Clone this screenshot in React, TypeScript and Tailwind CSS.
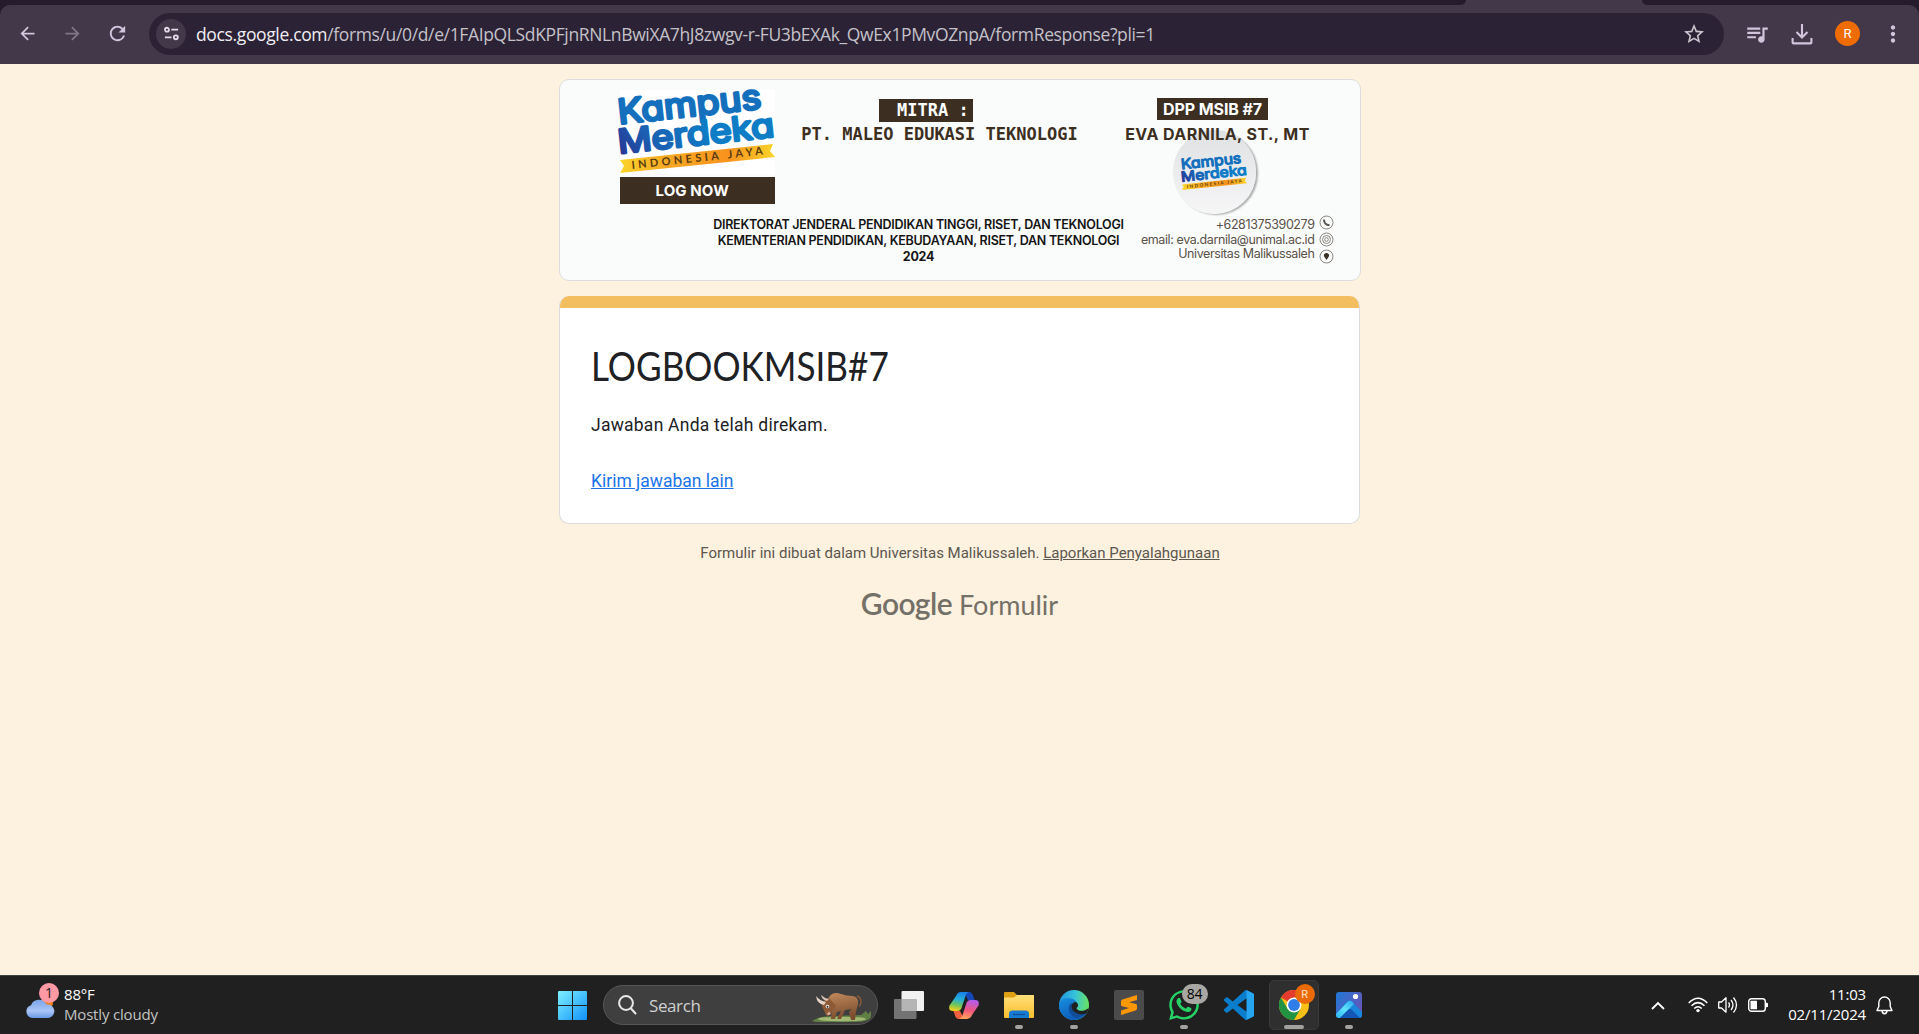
import React from "react";
import { MdQueueMusic, MdStarBorder, MdMoreVert, MdArrowBack, MdArrowForward, MdRefresh } from "react-icons/md";
import { FaWhatsapp } from "react-icons/fa";

function SiteControlsIcon() {
  return (
    <svg width="17" height="17" viewBox="0 0 18 18" fill="none" stroke="#e3dbe8" strokeWidth="1.9">
      <circle cx="4.2" cy="5" r="2.1" />
      <path d="M8.8 5H16M2 13H9" />
      <circle cx="13.6" cy="13" r="2.1" />
    </svg>
  );
}

function DownloadIcon() {
  return (
    <svg width="22" height="22" viewBox="0 0 22 22" fill="none" stroke="#d3c3dc" strokeWidth="2.1">
      <path d="M11 1V14M5.5 9L11 14.5L16.5 9M1.6 15V19.5Q1.6 20.4 2.5 20.4H19.5Q20.4 20.4 20.4 19.5V15" />
    </svg>
  );
}

function BrowserToolbar() {
  return (
    <header className="h-16 shrink-0 bg-[#241b2d]">
      <div className="flex h-[5px] bg-[#423849]">
        <div className="h-full flex-1 rounded-br-[14px] bg-[#241b2d]" />
        <div className="h-full w-[176px]" />
        <div className="h-full w-[277px] rounded-bl-[14px] bg-[#241b2d]" />
      </div>
      <div className="flex h-[59px] items-center rounded-t-[10px] bg-[#423849]">
        <MdArrowBack className="ml-[17px] size-[21px] -translate-y-px text-[#d3c3dc]" />
        <MdArrowForward className="ml-6 size-[21px] -translate-y-px text-[#81758a]" />
        <MdRefresh className="ml-[23px] size-[23px] -translate-y-px text-[#d3c3dc]" />
        <div className="ml-[20px] flex h-[42px] w-[1575px] -translate-y-px items-center rounded-full bg-[#2b2335] pl-[7px]">
          <div className="flex size-[30px] shrink-0 items-center justify-center rounded-full bg-[#423849]">
            <SiteControlsIcon />
          </div>
          <div className="ml-[10px] mt-[3px] whitespace-nowrap font-['Open_Sans','Noto_Sans',sans-serif] text-[17.5px] leading-none tracking-[-0.36px] text-[#c5c1c9]">
            <span className="text-[#f1edf4]">docs.google.com</span>
            <span>/forms/u/0/d/e/1FAIpQLSdKPFjnRNLnBwiXA7hJ8zwgv-r-FU3bEXAk_QwEx1PMvOZnpA/formResponse?pli=1</span>
          </div>
          <MdStarBorder className="ml-auto mr-[18px] size-[24px] text-[#cbc6ce]" />
        </div>
        <MdQueueMusic className="ml-5 size-[26px] -translate-y-px text-[#d3c3dc]" />
        <div className="ml-[21px] -translate-y-px"><DownloadIcon /></div>
        <div className="ml-[22px] flex size-[25px] -translate-y-px items-center justify-center rounded-full bg-[#ef6c00] font-['Roboto',sans-serif] text-[13px] text-white">R</div>
        <MdMoreVert className="ml-5 size-[26px] -translate-y-px text-[#d3c3dc]" />
      </div>
    </header>
  );
}

function KampusLogo({ id, className }: { id: string; className: string }) {
  const blue = "url(#" + id + "b)";
  return (
    <svg className={className} viewBox="0 0 155 83">
      <defs>
        <linearGradient id={id + "b"} gradientUnits="userSpaceOnUse" x1="0" y1="10" x2="70" y2="-40">
          <stop offset="0" stopColor="#2a2f8e" />
          <stop offset="0.45" stopColor="#1b5fb2" />
          <stop offset="1" stopColor="#0f7dc6" />
        </linearGradient>
        <linearGradient id={id + "y"}>
          <stop offset="0" stopColor="#fbd42a" />
          <stop offset="0.3" stopColor="#f7a823" />
          <stop offset="0.7" stopColor="#f7931e" />
          <stop offset="1" stopColor="#fbd42a" />
        </linearGradient>
      </defs>
      <g className="[font-feature-settings:'cv11']" fontFamily="Inter, sans-serif" fontWeight="400" stroke={blue} fill={blue} strokeWidth="2.8" strokeLinejoin="round">
        <text transform="translate(-1 34) rotate(-6.2)" fontSize="34" textLength="144" lengthAdjust="spacingAndGlyphs" fill="#1470bd" stroke="#1470bd">Kampus</text>
        <text transform="translate(-1 63.500) rotate(-6.2)" fontSize="33" textLength="157" lengthAdjust="spacingAndGlyphs">Merdeka</text>
      </g>
      <path d="M0 70L153 54L150 61L155 67L0 83L4 76Z" fill={"url(#" + id + "y)"} />
      <text transform="translate(12 79) rotate(-6.3)" fontFamily="Lato, sans-serif" fontWeight="700" fontSize="11" fill="#5a3b12" textLength="132">INDONESIA JAYA</text>
    </svg>
  );
}

function ContactIcon({ kind }: { kind: "phone" | "mail" | "pin" }) {
  return (
    <svg width="15" height="15" viewBox="0 0 15 15" fill="none" stroke="#8a8580" strokeWidth="1">
      <circle cx="7.5" cy="7.5" r="6.5" />
      {kind === "phone" && <path d="M5 4.5C5 8 7 10 10.5 10.2" stroke="#5d564f" strokeWidth="2" />}
      {kind === "mail" && (
        <g>
          <circle cx="7.5" cy="7.5" r="4" />
          <circle cx="7.5" cy="7.5" r="1.8" />
        </g>
      )}
      {kind === "pin" && <path d="M7.5 11L5 7.2A2.6 2.6 0 1 1 10 7.2Z" fill="#3c3024" stroke="none" />}
    </svg>
  );
}

function Banner() {
  return (
    <section className="flex h-[202px] w-[802px] shrink-0 flex-col overflow-hidden rounded-[10px] border border-[#dadce0] bg-[#fafcfb] font-['Inter',sans-serif]">
      <div className="flex h-[137px] shrink-0">
        <div className="ml-[60px] mt-[10px] w-[155px]">
          <div className="h-[84px] bg-white">
            <KampusLogo id="big" className="h-[83px] w-[155px] overflow-visible" />
          </div>
          <div className="mt-[3px] flex h-[27px] items-center bg-[#3c2f22] pl-[36px] text-[15px] font-bold leading-none tracking-[0.1px] text-white">
            LOG NOW
          </div>
        </div>
        <div className="ml-[26px] mt-[19px] flex w-[278px] flex-col items-center whitespace-nowrap font-['DejaVu_Sans_Mono',monospace] text-[17px] font-bold leading-none">
          <div className="ml-[-27px] flex h-[23px] w-[94px] items-center bg-[#3c2f22] pl-[18px] text-white">MITRA :</div>
          <div className="mt-1 text-[#3c2f22]">PT. MALEO EDUKASI TEKNOLOGI</div>
        </div>
        <div className="ml-[43px] mt-[18px] flex w-[192px] flex-col items-center whitespace-nowrap leading-none">
          <div className="ml-[-10px] flex h-[22px] w-[111px] items-center justify-center bg-[#3c2f22] text-[16px] font-bold tracking-[-0.1px] text-white">DPP MSIB #7</div>
          <div className="z-10 mt-[6px] text-[16px] font-bold tracking-[0.43px] text-[#3c2f22]">EVA DARNILA, ST., MT</div>
          <div className="ml-[-7px] mt-[-12px] flex h-[84px] w-[83px] shrink-0 justify-center rounded-full bg-gradient-to-b from-[#dfe1e3] to-[#f6f6f7] pt-[25px] shadow-[2px_1px_2px_#a9abad]">
            <KampusLogo id="mini" className="h-[35px] w-[65px] overflow-visible" />
          </div>
        </div>
      </div>
      <div className="flex whitespace-nowrap">
        <div className="ml-[149px] w-[420px] text-center text-[12.5px] font-semibold leading-4 tracking-[-0.27px] text-[#151515]">
          <div>DIREKTORAT JENDERAL PENDIDIKAN TINGGI, RISET, DAN TEKNOLOGI</div>
          <div>KEMENTERIAN PENDIDIKAN, KEBUDAYAAN, RISET, DAN TEKNOLOGI</div>
          <div className="font-bold">2024</div>
        </div>
        <div className="ml-auto text-right text-[12.5px] leading-[15px] tracking-[-0.4px] text-[#5b5249]">
          <div>+6281375390279</div>
          <div>email: eva.darnila@unimal.ac.id</div>
          <div className="-mt-px">Universitas Malikussaleh</div>
        </div>
        <div className="ml-[4px] mr-[26px] mt-[-2px] flex flex-col gap-[2px]">
          <ContactIcon kind="phone" />
          <ContactIcon kind="mail" />
          <ContactIcon kind="pin" />
        </div>
      </div>
    </section>
  );
}

function ResponseCard() {
  return (
    <section className="mt-[15px] h-[228px] w-[801px] shrink-0 overflow-hidden rounded-[10px] border border-t-0 border-[#dadce0] bg-white">
      <div className="h-3 bg-[#f2be5f]" />
      <div className="pl-[31px] font-['Roboto',sans-serif] text-[17.5px] text-[#202124]">
        <h1 className="mt-[33px] origin-left scale-x-[0.878] whitespace-nowrap font-['Lato',sans-serif] text-[40px] leading-[50px]">LOGBOOKMSIB#7</h1>
        <p className="mt-[22px] leading-[25px] tracking-[0.24px]">Jawaban Anda telah direkam.</p>
        <p className="mt-[31px] leading-[25px]"><a href="#" className="text-[#1a73e8] underline">Kirim jawaban lain</a></p>
      </div>
    </section>
  );
}

function WeatherIcon() {
  return (
    <svg width="30" height="22" viewBox="0 0 30 22">
      <defs>
        <linearGradient id="cloud" x1="0" y1="0" x2="0" y2="1">
          <stop offset="0" stopColor="#7ba4ea" />
          <stop offset="0.6" stopColor="#a9c6f7" />
          <stop offset="1" stopColor="#6c98e8" />
        </linearGradient>
      </defs>
      <circle cx="22" cy="6" r="6" fill="#f0801c" />
      <path d="M7 21A6.6 6.6 0 0 1 6 8.2A8.5 8.5 0 0 1 21.500 7.500A6.800 6.800 0 0 1 23.500 21Z" fill="url(#cloud)" />
    </svg>
  );
}

function StartIcon() {
  return (
    <svg width="29" height="29" viewBox="0 0 29 29">
      <defs>
        <linearGradient id="win" x1="0" y1="0" x2="29" y2="29" gradientUnits="userSpaceOnUse">
          <stop offset="0" stopColor="#7df0ff" />
          <stop offset="1" stopColor="#1192fc" />
        </linearGradient>
      </defs>
      <path d="M1 0H14V14H0V1Q0 0 1 0ZM15 0H28Q29 0 29 1V14H15ZM0 15H14V29H1Q0 29 0 28ZM15 15H29V28Q29 29 28 29H15Z" fill="url(#win)" />
    </svg>
  );
}

function BisonArt() {
  return (
    <svg width="62" height="31" viewBox="0 0 62 31">
      <defs>
        <linearGradient id="fur" x1="0" y1="0" x2="0.2" y2="1">
          <stop offset="0" stopColor="#c18a5c" />
          <stop offset="1" stopColor="#7a4c2e" />
        </linearGradient>
      </defs>
      <path d="M1 29Q8 24 22 24L50 23L55 19L57 22L60 19V25Q58 30 44 30H8Q3 30 1 29Z" fill="#5f7f45" />
      <ellipse cx="31" cy="27" rx="24" ry="2.300" fill="#a3b873" />
      <path d="M46 4Q50 5 50 10Q50 13 48 14" stroke="#8a5a38" strokeWidth="1.500" fill="none" />
      <path d="M21 16L20 27H24L26 20L30 19L26 27H30L34 18L41 17L38 20L40 28H44L45 20L47 12Q48 5 42 4Q35 4 30 2Q22 -1 18 5Q15 9 18 15Z" fill="url(#fur)" />
      <path d="M18 6Q10 9 11 14L15 23Q18 25 20 21L25 14Z" fill="#8d5a37" />
      <path d="M13 13Q6 12 5 4Q9 9 15 10Z" fill="#e5d3c8" />
      <path d="M16 9Q11 8 10 3Q13 6 18 7Z" fill="#d8c2b6" />
      <circle cx="16.500" cy="14.500" r="1.800" fill="#fff" />
      <circle cx="16.500" cy="14.800" r="1" fill="#222" />
      <path d="M15.500 22Q18 24.500 20 21.500L18 19.500Z" fill="#d9a58c" />
    </svg>
  );
}

function SearchIcon() {
  return (
    <svg width="19" height="20" viewBox="0 0 19 20" fill="none" stroke="#e8e8e8" strokeWidth="2" strokeLinecap="round">
      <circle cx="8" cy="8" r="6.900" />
      <path d="M13 13.500L17.500 18.500" />
    </svg>
  );
}

function TaskViewIcon() {
  return (
    <svg width="30" height="28" viewBox="0 0 30 28">
      <rect x="7.500" y="0" width="22.500" height="20" rx="1" fill="#f1f1f1" />
      <rect x="0" y="8" width="22.500" height="20" rx="1" fill="#737373" />
      <path d="M7.500 8H22.500V20H7.500Z" fill="#b5b5b5" />
    </svg>
  );
}

function CopilotIcon() {
  return (
    <svg width="30" height="27" viewBox="0 0 30 27">
      <defs>
        <linearGradient id="copA" x1="0.600" y1="0" x2="0.400" y2="1">
          <stop offset="0" stopColor="#1a7fe8" />
          <stop offset="0.400" stopColor="#23b0d8" />
          <stop offset="0.700" stopColor="#6fc55a" />
          <stop offset="1" stopColor="#f3d21c" />
        </linearGradient>
        <linearGradient id="copB" x1="0.600" y1="0" x2="0.400" y2="1">
          <stop offset="0" stopColor="#b35cf0" />
          <stop offset="0.550" stopColor="#f0577c" />
          <stop offset="1" stopColor="#ffa45c" />
        </linearGradient>
      </defs>
      <path d="M15 0H20Q23 0 24 3.500L25.500 8H19Z" fill="#1547b8" />
      <path d="M15 27H10Q7 27 6 23.500L4.500 19H11Z" fill="#f0603e" />
      <path d="M7 4Q8.500 0 12 0H20Q17.500 .5 16.500 4L12.500 16Q11.500 19 8.500 19H4Q-1 19 .5 13.500Z" fill="url(#copA)" />
      <path d="M23 23Q21.500 27 18 27H10Q12.500 26.500 13.500 23L17.500 11Q18.500 8 21.500 8H26Q31 8 29.500 13.500Z" fill="url(#copB)" />
    </svg>
  );
}

function FolderIcon() {
  return (
    <svg width="30" height="28" viewBox="0 0 30 28">
      <defs>
        <linearGradient id="fold" x1="0" y1="0" x2="0" y2="1">
          <stop offset="0" stopColor="#ffe07a" />
          <stop offset="1" stopColor="#fbbd2c" />
        </linearGradient>
      </defs>
      <path d="M0 2Q0 1 1 1H10L13 4H29Q30 4 30 5V12H0Z" fill="#dd9f13" />
      <path d="M0 6.500H10L13 4H29Q30 4 30 5V26Q30 27 29 27H1Q0 27 0 26Z" fill="url(#fold)" />
      <path d="M5 27V23Q5 19.500 8.500 19.500H21.500Q25 19.500 25 23V27Z" fill="#1779cf" />
      <path d="M9 23.500H21" stroke="#0d4f96" strokeWidth="1.200" />
    </svg>
  );
}

function EdgeIcon() {
  return (
    <svg width="30" height="30" viewBox="0 0 30 30">
      <defs>
        <linearGradient id="edT" x1="0" y1="0.300" x2="1" y2="0.400">
          <stop offset="0" stopColor="#2391dd" />
          <stop offset="0.500" stopColor="#34c2dc" />
          <stop offset="1" stopColor="#6be35f" />
        </linearGradient>
        <linearGradient id="edB" x1="0" y1="0" x2="0.500" y2="1">
          <stop offset="0" stopColor="#1790e0" />
          <stop offset="1" stopColor="#0c59b8" />
        </linearGradient>
        <clipPath id="edC"><circle cx="15" cy="15" r="15" /></clipPath>
      </defs>
      <g clipPath="url(#edC)">
        <rect width="30" height="30" fill="url(#edT)" />
        <path d="M0 14Q2 8 9 8Q16.500 8 18.500 14L16 19L30 22V30H0Z" fill="url(#edB)" />
        <path d="M12 13Q9 16 10 21Q12.500 28 19 28L30 22L20 22Z" fill="#114d96" />
        <path d="M18.500 13.500Q20 16 17.500 18Q18 21 23 20.800Q27 20.500 30 17V24L28 23Q24 25 20 24Q13 22 12.500 17Q12.500 13 16 12Q18 12 18.500 13.500Z" fill="#202020" />
        <path d="M18.500 18Q22 21 26 18.500Q30 15.500 30 12V18Q25 21.500 21 20.500Q18 20 18.500 18Z" fill="#5bd86c" />
      </g>
    </svg>
  );
}

function SublimeIcon() {
  return (
    <svg width="30" height="30" viewBox="0 0 30 30">
      <rect width="30" height="30" rx="2" fill="#4b4b4b" />
      <path d="M23 5L8.500 9.500Q7 10 7 11.500V15Q7 16 8 16.300L15 18L7 20.500V25L21.500 20.500Q23 20 23 18.500V15.500Q23 14.300 22 14L15 12.300L23 10Z" fill="#ff9800" />
    </svg>
  );
}

function CodeIcon() {
  const d = "M23.15 2.587L18.21.21a1.494 1.494 0 0 0-1.705.29l-9.46 8.63-4.12-3.128a.999.999 0 0 0-1.276.057L.327 7.261A1 1 0 0 0 .326 8.74L3.899 12 .326 15.26a1 1 0 0 0 .001 1.479L1.65 17.94a.999.999 0 0 0 1.276.057l4.12-3.128 9.46 8.63a1.492 1.492 0 0 0 1.704.29l4.942-2.377A1.5 1.5 0 0 0 24 20.06V3.939a1.5 1.5 0 0 0-.85-1.352zm-5.146 14.861L10.826 12l7.178-5.448v10.896z";
  return (
    <svg width="30" height="30" viewBox="0 0 24 24">
      <clipPath id="codeR"><rect x="18" width="6" height="24" /></clipPath>
      <path d={d} fill="#0a7dcc" />
      <path d={d} fill="#27a6f0" clipPath="url(#codeR)" />
    </svg>
  );
}

function ChromeIcon() {
  return (
    <svg width="30" height="30" viewBox="0 0 30 30">
      <circle cx="15" cy="15" r="15" fill="#fbc116" />
      <path d="M15 15L2 7.500A15 15 0 0 1 28 7.500H15Z" fill="#e33b2e" />
      <path d="M2 7.500A15 15 0 0 0 15 30L21.500 18.700L8.500 18.700Z" fill="#229342" />
      <circle cx="15" cy="15" r="7.500" fill="#fff" />
      <circle cx="15" cy="15" r="5.900" fill="#2f7de9" />
    </svg>
  );
}

function PhotosIcon() {
  return (
    <svg width="26" height="26" viewBox="0 0 26 26">
      <defs>
        <linearGradient id="phB" x1="0" y1="0" x2="1" y2="0.600">
          <stop offset="0" stopColor="#1f78d6" />
          <stop offset="1" stopColor="#6457b8" />
        </linearGradient>
        <linearGradient id="phM" x1="1" y1="0" x2="0" y2="1">
          <stop offset="0" stopColor="#2aa5ee" />
          <stop offset="0.500" stopColor="#5fe3fb" />
          <stop offset="1" stopColor="#26b3f2" />
        </linearGradient>
        <clipPath id="phC"><rect width="26" height="26" rx="3" /></clipPath>
      </defs>
      <g clipPath="url(#phC)">
        <rect width="26" height="26" fill="url(#phB)" />
        <path d="M8 12L12 9Q14 8 16 9.500L26 20V26H6Z" fill="#1a86dd" />
        <path d="M0 22L12 9.500Q14 8 16 9.500L18 12L4 26H0Z" fill="url(#phM)" />
        <path d="M4 26L12.500 17.500Q14 16.300 15.500 17.500L24 26Z" fill="#1257b4" />
        <circle cx="19.500" cy="4.500" r="2.600" fill="#fff" />
      </g>
    </svg>
  );
}

function TaskCell({ children, dot, active, badge }: { children: React.ReactNode; dot?: boolean; active?: boolean; badge?: React.ReactNode }) {
  return (
    <div className="flex w-[55px] justify-center">
      <div className={"relative mt-1 flex h-[50px] w-[50px] flex-col items-center rounded-[5px] border " + (active ? "border-[#3a3a3a] bg-[#2f2f2f]" : "border-transparent")}>
        <div className="mt-[9px] flex h-[30px] items-center">{children}</div>
        {(dot || active) && <div className={"mt-[5px] h-1 rounded-full bg-[#a3a19d] " + (active ? "w-5" : "w-2")} />}
        {badge}
      </div>
    </div>
  );
}

function TrayIcons() {
  return (
    <div className="flex items-center">
      <svg width="14" height="9" viewBox="0 0 14 9" fill="none" stroke="#fff" strokeWidth="1.800"><path d="M1 8L7 2L13 8" /></svg>
      <svg className="ml-[23px]" width="20" height="16" viewBox="0 0 20 16" fill="none" stroke="#fff" strokeWidth="1.500">
        <path d="M0.700 6Q10 -3.500 19.300 6M3.500 8.800Q10 2.500 16.500 8.800M6.200 11.500Q10 8 13.800 11.500" />
        <circle cx="10" cy="13.600" r="1.700" fill="#fff" stroke="none" />
      </svg>
      <svg className="ml-[10px]" width="21" height="18" viewBox="0 0 21 18" fill="none" stroke="#fff" strokeWidth="1.300" strokeLinejoin="round">
        <path d="M0.700 6H3.500L8 1.800V16.200L3.500 12H0.700Z" />
        <path d="M10.500 6.500Q12.500 9 10.500 11.500M13 4Q17 9 13 14M15.500 1.500Q21.500 9 15.500 16.500" />
      </svg>
      <svg className="ml-[9px]" width="21" height="14" viewBox="0 0 21 14">
        <rect x="0.700" y="0.700" width="16.600" height="12.600" rx="2.800" fill="none" stroke="#fff" strokeWidth="1.400" />
        <rect x="2.500" y="2.800" width="6.500" height="8.400" rx="0.500" fill="#fff" />
        <path d="M18 4.500L20 5.300V8.700L18 9.500Z" fill="#fff" />
      </svg>
    </div>
  );
}

function Taskbar() {
  return (
    <footer className="flex h-[59px] shrink-0 border-t border-[#3f4442] bg-[#202020] font-['Open_Sans','Noto_Sans',sans-serif] text-[15px] tracking-[-0.18px]">
      <div className="flex w-[558px] items-start pl-[25px] pt-2">
        <div className="relative mt-[13px]">
          <WeatherIcon />
          <span className="absolute left-[14px] top-[-14px] flex size-5 items-center justify-center rounded-full bg-[#ff99a4] text-[14px] leading-none text-[#1b1b1b]">1</span>
        </div>
        <div className="ml-[9px] whitespace-nowrap leading-5 text-white">
          <div>88°F</div>
          <div className="text-[#c3c3c3]">Mostly cloudy</div>
        </div>
      </div>
      <div className="mt-[15px]"><StartIcon /></div>
      <div className="ml-4 mt-[9px] flex h-[40px] w-[275px] items-center rounded-full border border-[#565656] bg-[#3f3f3f] pl-[14px]">
        <SearchIcon />
        <span className="ml-[12px] text-[17px] leading-none tracking-[-0.4px] text-[#d0d0d0]">Search</span>
        <div className="ml-auto mr-[4px] mt-[5px]"><BisonArt /></div>
      </div>
      <div className="ml-[3px] flex">
        <TaskCell><TaskViewIcon /></TaskCell>
        <TaskCell><CopilotIcon /></TaskCell>
        <TaskCell dot><FolderIcon /></TaskCell>
        <TaskCell dot><EdgeIcon /></TaskCell>
        <TaskCell><SublimeIcon /></TaskCell>
        <TaskCell dot badge={<span className="absolute left-[22px] top-[3px] flex h-5 w-[26px] items-center justify-center rounded-full bg-[#a9a7a3] text-[14px] leading-none text-black">84</span>}>
          <FaWhatsapp className="size-[34px] text-[#25d366]" />
        </TaskCell>
        <TaskCell><CodeIcon /></TaskCell>
        <TaskCell active badge={<span className="absolute left-[25px] top-[3px] flex size-5 items-center justify-center rounded-full bg-[#ea6a05] font-['Roboto',sans-serif] text-[11px] leading-none text-[#ffe2cc]">R</span>}>
          <ChromeIcon />
        </TaskCell>
        <TaskCell dot><PhotosIcon /></TaskCell>
      </div>
      <div className="ml-auto flex items-center">
        <TrayIcons />
        <div className="-mt-px ml-[19px] whitespace-nowrap pb-px text-right leading-5 text-white">
          <div>11:03</div>
          <div>02/11/2024</div>
        </div>
        <svg className="ml-[10px] mr-[26px]" width="17" height="19" viewBox="0 0 17 19" fill="none" stroke="#fff" strokeWidth="1.400" strokeLinejoin="round">
          <path d="M8.500 1A5.700 5.700 0 0 0 2.800 6.700V10.500L1 14.500H16L14.200 10.500V6.700A5.700 5.700 0 0 0 8.500 1ZM6 15Q6.500 17.700 8.500 17.700Q10.500 17.700 11 15" />
        </svg>
      </div>
    </footer>
  );
}

export default function App() {
  return (
    <div className="flex h-[1034px] w-[1919px] flex-col overflow-hidden bg-[#fdf1df]">
      <BrowserToolbar />
      <main className="flex flex-1 flex-col items-center pt-[15px]">
        <Banner />
        <ResponseCard />
        <p className="mt-[19px] pl-px font-['Roboto',sans-serif] text-[15px] leading-5 text-[#5c574f]">
          Formulir ini dibuat dalam Universitas Malikussaleh. <a href="#" className="underline">Laporkan Penyalahgunaan</a>
        </p>
        <div className="mt-[20px] flex items-baseline font-['Lato',sans-serif] leading-10 text-[#757067]">
          <span className="text-[30px] font-semibold tracking-[-0.6px]">Google</span>
          <span className="ml-[7px] text-[27px]">Formulir</span>
        </div>
      </main>
      <Taskbar />
    </div>
  );
}
